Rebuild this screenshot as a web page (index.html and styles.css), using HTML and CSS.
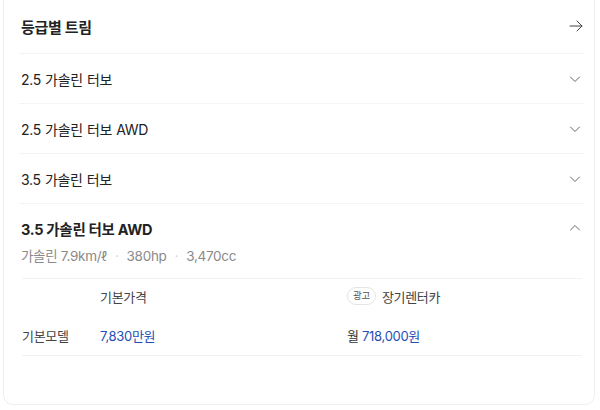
FILE: index.html
```html
<!DOCTYPE html>
<html lang="ko">
<head>
    <meta charset="UTF-8">
    <meta name="viewport" content="width=device-width, initial-scale=1.0">
    <title>등급별 트림</title>
    <link rel="stylesheet" href="styles.css">
</head>
<body>
    <div class="card">
        <div class="card-head">
            <h2>등급별 트림</h2>
            <svg class="icon" width="16" height="16" viewBox="0 0 16 16" fill="none" stroke="#444" stroke-width="1" stroke-linecap="round" stroke-linejoin="round">
                <path d="M2 8h12M9 3l5 5-5 5"/>
            </svg>
        </div>

        <div class="trim">
            <span>2.5 가솔린 터보</span>
            <svg class="icon" width="14" height="14" viewBox="0 0 14 14" fill="none" stroke="#666" stroke-width="1" stroke-linecap="round" stroke-linejoin="round"><path d="M2.5 5l4.5 4.5L11.5 5"/></svg>
        </div>
        <div class="trim">
            <span>2.5 가솔린 터보 AWD</span>
            <svg class="icon" width="14" height="14" viewBox="0 0 14 14" fill="none" stroke="#666" stroke-width="1" stroke-linecap="round" stroke-linejoin="round"><path d="M2.5 5l4.5 4.5L11.5 5"/></svg>
        </div>
        <div class="trim">
            <span>3.5 가솔린 터보</span>
            <svg class="icon" width="14" height="14" viewBox="0 0 14 14" fill="none" stroke="#666" stroke-width="1" stroke-linecap="round" stroke-linejoin="round"><path d="M2.5 5l4.5 4.5L11.5 5"/></svg>
        </div>

        <div class="trim-open">
            <div class="trim-title">
                <strong>3.5 가솔린 터보 AWD</strong>
                <svg class="icon" width="14" height="14" viewBox="0 0 14 14" fill="none" stroke="#666" stroke-width="1" stroke-linecap="round" stroke-linejoin="round"><path d="M2.5 9l4.5-4.5L11.5 9"/></svg>
            </div>
            <div class="specs">
                가솔린 7.9km/ℓ<span class="dot">·</span>380hp<span class="dot">·</span>3,470cc
            </div>

            <div class="price-table">
                <div class="price-head">
                    <span></span>
                    <span>기본가격</span>
                    <span class="rent"><em class="ad">광고</em>장기렌터카</span>
                </div>
                <div class="price-row">
                    <span class="model">기본모델</span>
                    <span class="blue">7,830만원</span>
                    <span>월 <span class="blue">718,000원</span></span>
                </div>
            </div>
        </div>
    </div>
</body>
</html>
```

FILE: styles.css
```css
body {
    margin: 0;
    background: #fff;
    font-family: Inter, "Noto Sans CJK KR", sans-serif;
    color: #222;
    letter-spacing: -0.3px;
}

.card {
    margin: -12px 5px 0 3px;
    height: 417px;
    box-sizing: border-box;
    border: 1px solid #eeeeee;
    border-radius: 10px;
    padding: 0 10px 0 15px;
    background: #fff;
}

.card-head {
    display: flex;
    justify-content: space-between;
    align-items: center;
    height: 65px;
    padding: 10px 0 0 2px;
    box-sizing: border-box;
    border-bottom: 1px solid #f4f4f4;
}

h2 {
    margin: 0;
    font-size: 15px;
    font-weight: 700;
}

.trim {
    display: flex;
    justify-content: space-between;
    align-items: center;
    height: 50px;
    box-sizing: border-box;
    border-bottom: 1px solid #f4f4f4;
    font-size: 14px;
    padding: 0 2px 0 2px;
}

.trim span {
    word-spacing: 0.5px;
}

.trim-open {
    padding: 14px 2px 0;
}

.trim-title {
    display: flex;
    justify-content: space-between;
    align-items: center;
    height: 20px;
    font-size: 14.5px;
}

.specs {
    margin-top: 8px;
    height: 20px;
    line-height: 20px;
    font-size: 13.5px;
    color: #8a8a8a;
}

.dot {
    color: #d5d5d5;
    margin: 0 8px;
}

.price-table {
    margin: 12px 0 0 1px;
    width: 560px;
    border-top: 1px solid #f2f2f2;
    font-size: 13px;
}

.price-head,
.price-row {
    display: grid;
    grid-template-columns: 78px 247px 1fr;
    align-items: center;
}

.price-head {
    height: 34px;
    color: #444;
}

.price-row {
    height: 40px;
    padding-top: 2px;
    border-bottom: 1px solid #f0f0f0;
    color: #333;
}

.rent {
    display: flex;
    align-items: center;
}

.ad {
    font-style: normal;
    font-size: 9.5px;
    color: #555;
    border: 1px solid #e5e5e5;
    border-radius: 9px;
    padding: 1px 5px;
    margin-right: 6px;
    line-height: 14px;
}

.model {
    color: #444;
}

.blue {
    color: #1f4fb5;
}

.icon {
    display: block;
}
```
